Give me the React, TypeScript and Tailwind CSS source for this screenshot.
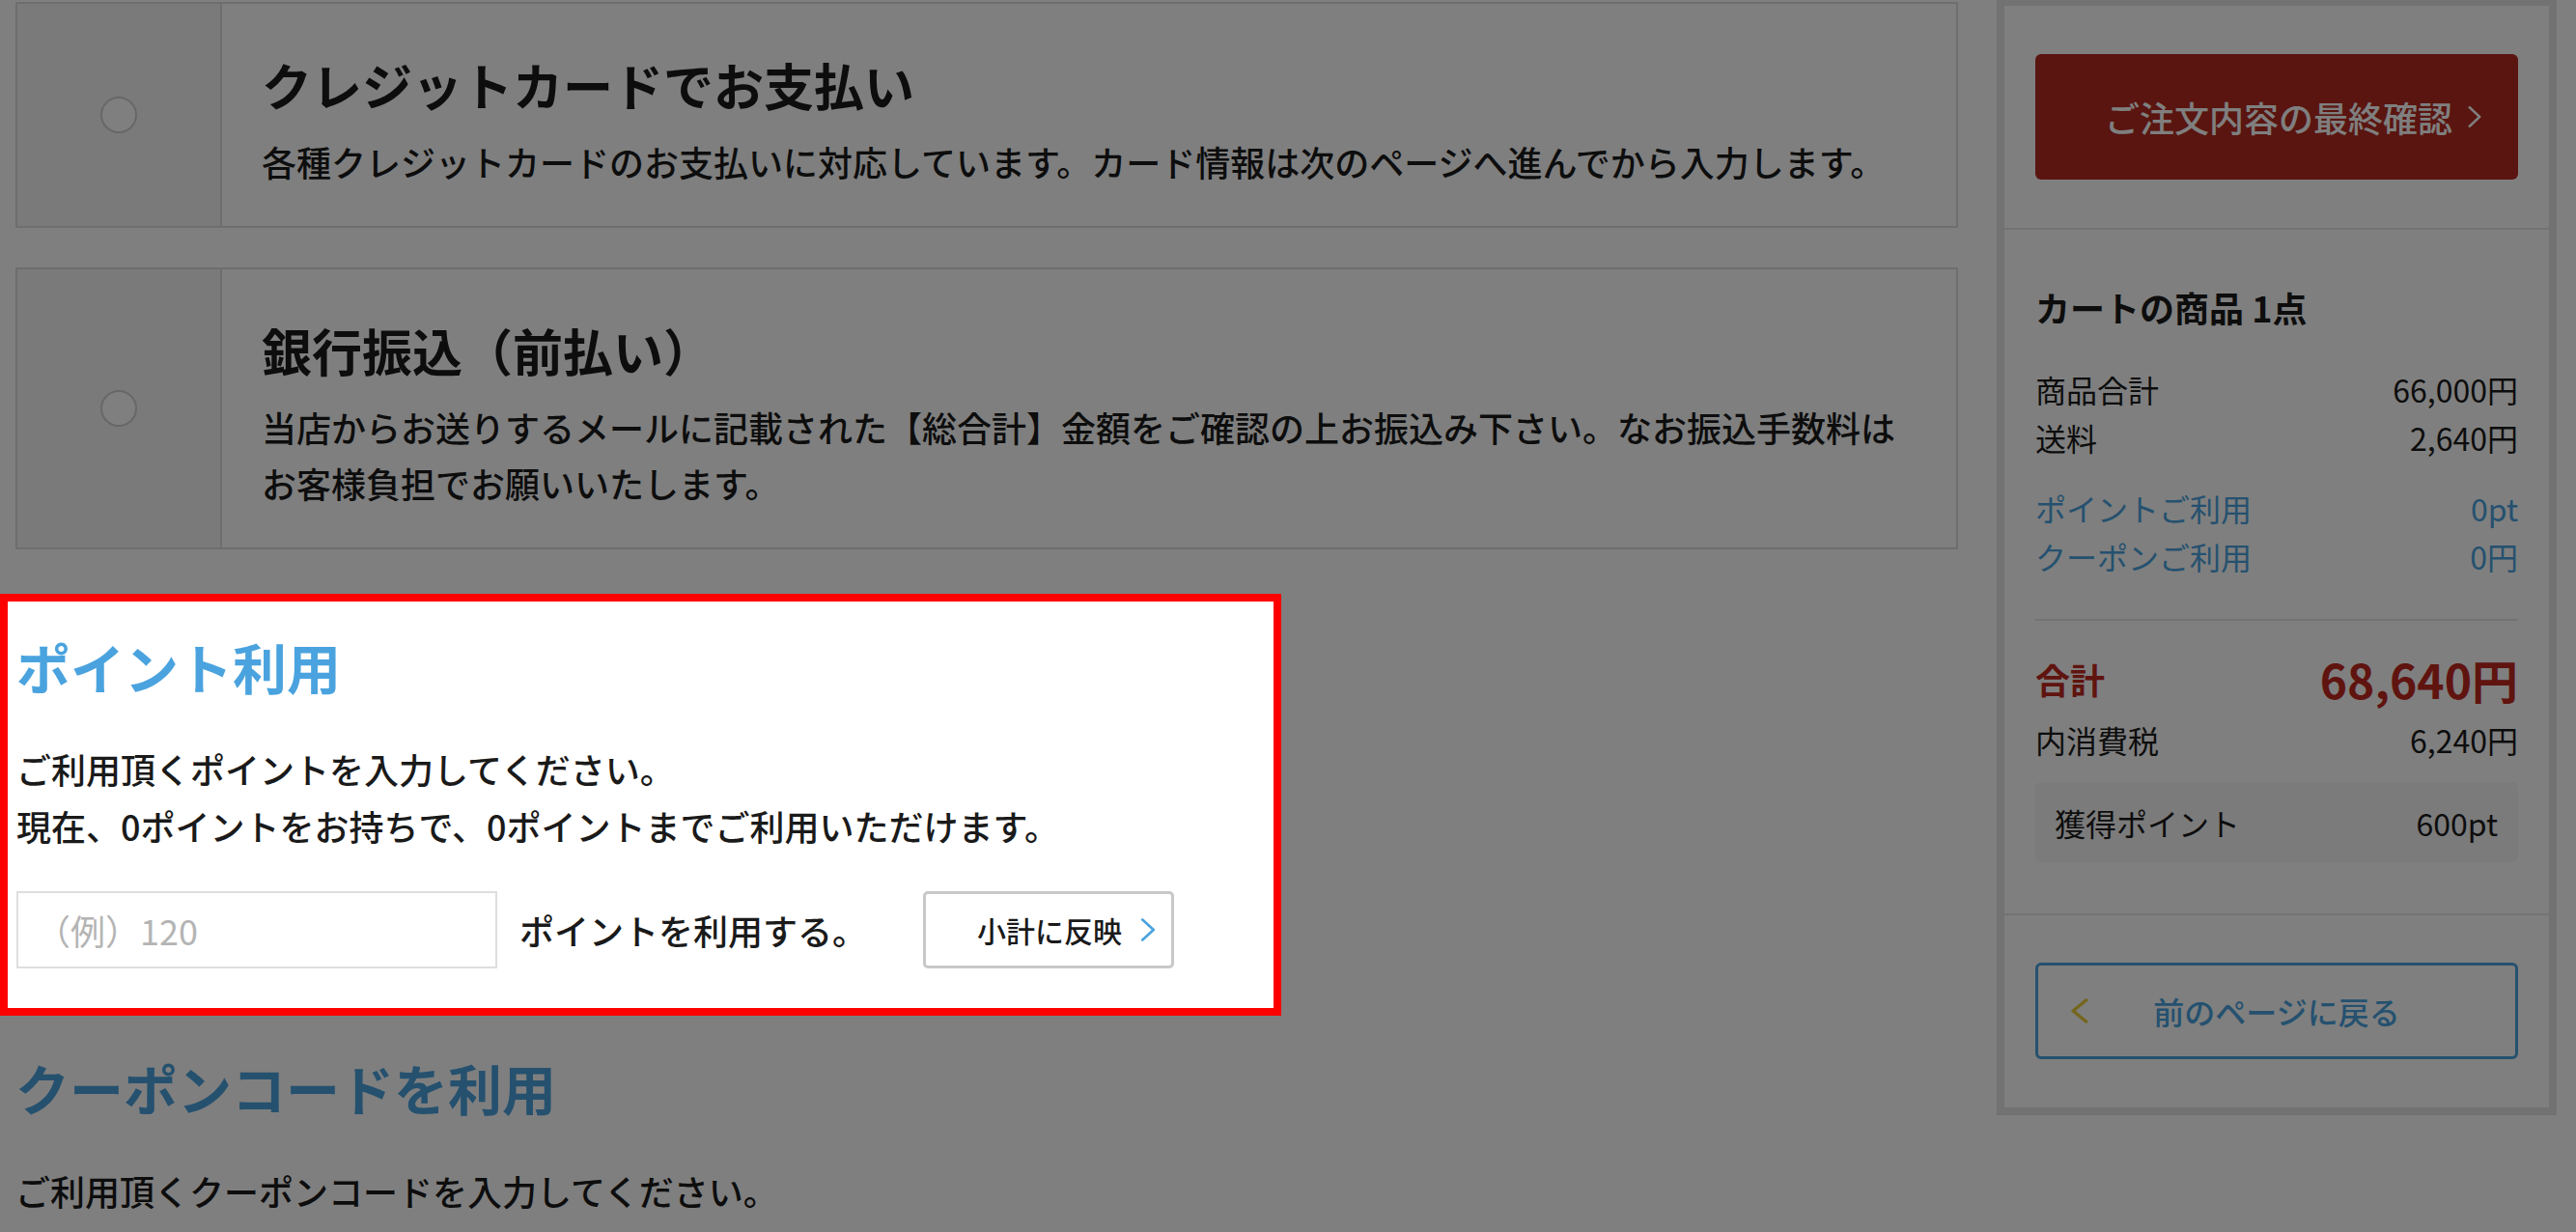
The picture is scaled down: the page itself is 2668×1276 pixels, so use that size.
import React from "react";

const BLUE = "text-[#4aa3de]";

function Chevron({ dir = "right", className = "" }: { dir?: "left" | "right"; className?: string }) {
  return (
    <svg viewBox="0 0 14 24" className={className} fill="none" stroke="currentColor" strokeWidth={2.2} strokeLinecap="round" strokeLinejoin="round" preserveAspectRatio="none">
      {dir === "right" ? <polyline points="3,3 11,12 3,21" /> : <polyline points="11,3 3,12 11,21" />}
    </svg>
  );
}

function PaymentCard({ title, desc }: { title: string; desc: string }) {
  return (
    <div className="flex border-2 border-[#dcdcdc] bg-white">
      <div className="flex w-[212px] shrink-0 items-center justify-center border-r-2 border-[#dcdcdc] bg-[#f4f4f4]">
        <span className="block h-[38px] w-[38px] rounded-full border-2 border-[#cfcfcf] bg-white" />
      </div>
      <div className="flex-1 pt-[45px] pb-[38px] pl-[41px] pr-[40px]">
        <h3 className="text-[52px] font-bold leading-[78px]">{title}</h3>
        <p className="mt-[11px] text-[36px] font-medium leading-[58px]">{desc}</p>
      </div>
    </div>
  );
}

function Row({ label, value, className = "" }: { label: string; value: string; className?: string }) {
  return (
    <div className={`flex items-center justify-between text-[32px] leading-[50px] ${className}`}>
      <span>{label}</span>
      <span>{value}</span>
    </div>
  );
}

export default function App() {
  return (
    <div className="min-h-screen bg-white font-['Noto_Sans_CJK_JP','Noto_Sans',sans-serif] text-[#1a1a1a]">
      <div className="flex items-start gap-[40px] pl-[16px] pr-[20px]">
        {/* Main column */}
        <main className="min-w-0 flex-1 pt-[2px]">
          <PaymentCard
            title="クレジットカードでお支払い"
            desc="各種クレジットカードのお支払いに対応しています。カード情報は次のページへ進んでから入力します。"
          />
          <div className="mt-[41px]">
            <PaymentCard
              title="銀行振込（前払い）"
              desc="当店からお送りするメールに記載された【総合計】金額をご確認の上お振込み下さい。なお振込手数料はお客様負担でお願いいたします。"
            />
          </div>

          {/* Point section (highlighted) */}
          <section className="relative z-20 -ml-[16px] mt-[46px] w-[1327px] border-8 border-[#ff0000] bg-white pl-[9px] pt-[27px] pb-[41px]">
            <h2 className={`text-[56px] font-bold leading-[80px] ${BLUE}`}>ポイント利用</h2>
            <p className="mt-[37px] text-[36px] font-medium leading-[59px]">
              ご利用頂くポイントを入力してください。
              <br />
              現在、0ポイントをお持ちで、0ポイントまでご利用いただけます。
            </p>
            <div className="mt-[38px] flex h-[80px] items-center">
              <input
                type="text"
                placeholder="（例）120"
                className="h-[80px] w-[498px] border-2 border-[#dedede] bg-white pl-[18px] text-[36px] outline-none placeholder:text-[#b4b4b4]"
              />
              <span className="ml-[23px] text-[36px] font-medium">ポイントを利用する。</span>
              <button className="ml-[58px] flex h-[80px] w-[260px] items-center rounded-[5px] border-[3px] border-[#c8c8c8] bg-white pl-[53px] text-[30px] font-medium text-[#1a1a1a]">
                <span>小計に反映</span>
                <Chevron className={`ml-[17px] h-[28px] w-[20px] ${BLUE}`} />
              </button>
            </div>
          </section>

          {/* Coupon section */}
          <section className="mt-[34px]">
            <h2 className={`text-[56px] font-bold leading-[80px] ${BLUE}`}>クーポンコードを利用</h2>
            <p className="mt-[38px] text-[36px] font-medium leading-[59px]">ご利用頂くクーポンコードを入力してください。</p>
          </section>
        </main>

        {/* Sidebar */}
        <aside className="-mt-[2px] w-[580px] shrink-0 border-8 border-[#e4e4e4] bg-white">
          <div className="border-b-2 border-[#e6e6e6] px-[32px] py-[50px]">
            <button className="flex h-[130px] w-full items-center justify-center rounded-[6px] bg-[#b42a20] pl-[36px] text-[36px] font-medium text-white">
              <span>ご注文内容の最終確認</span>
              <Chevron className="ml-[14px] h-[26px] w-[18px] text-white" />
            </button>
          </div>

          <div className="border-b-2 border-[#e6e6e6] px-[32px] pt-[53px] pb-[53px]">
            <h3 className="text-[36px] font-bold leading-[54px]">カートの商品 1点</h3>
            <div className="mt-[33px]">
              <Row label="商品合計" value="66,000円" />
              <Row label="送料" value="2,640円" />
            </div>
            <div className={`mt-[23px] ${BLUE}`}>
              <Row label="ポイントご利用" value="0pt" />
              <Row label="クーポンご利用" value="0円" />
            </div>
            <div className="mt-[40px] h-[2px] bg-[#e4e4e4]" />
            <div className="mt-[30px] flex h-[60px] items-center justify-between text-[#c0281e]">
              <span className="text-[36px] font-bold">合計</span>
              <span className="text-[48px] font-bold leading-none">68,640円</span>
            </div>
            <Row label="内消費税" value="6,240円" className="mt-[8px]" />
            <div className="mt-[19px] flex h-[83px] items-center justify-between rounded-[6px] bg-[#f6f6f6] pl-[20px] pr-[21px] text-[32px]">
              <span>獲得ポイント</span>
              <span>600pt</span>
            </div>
          </div>

          <div className="px-[32px] pt-[49px] pb-[50px]">
            <button className="grid h-[100px] w-full grid-cols-[1fr_auto_1fr] items-center rounded-[6px] border-[3px] border-[#4aa3de] bg-white text-[32px] font-medium">
              <span className="flex pl-[31px]">
                <Chevron dir="left" className="h-[30px] w-[24px] text-[#e8cc3a]" />
              </span>
              <span className={BLUE}>前のページに戻る</span>
              <span />
            </button>
          </div>
        </aside>
      </div>

      {/* Dim overlay */}
      <div className="fixed inset-0 z-10 bg-black/50" />
    </div>
  );
}
